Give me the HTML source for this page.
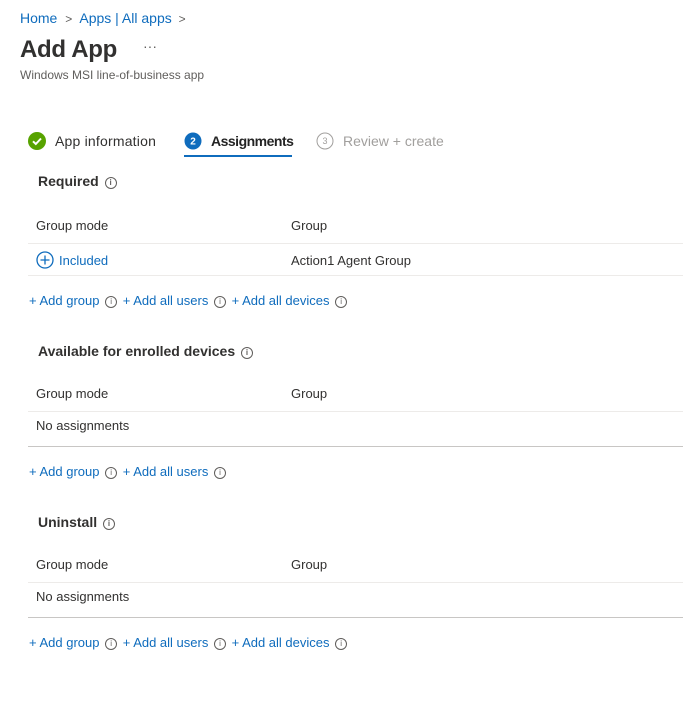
<!DOCTYPE html><html><head><style>
body{margin:0;width:683px;height:726px;background:#fff;font-family:"Liberation Sans",sans-serif;color:#323130;position:relative;overflow:hidden}
.a{position:absolute;white-space:nowrap}
.l{color:#0f6cbd;font-size:13px}
.i{display:inline-block;width:10px;height:10px;border:1px solid #605e5c;border-radius:50%;font-size:8px;line-height:10px;text-align:center;color:#605e5c;vertical-align:1px;margin:0 2px}
.h{font-size:14px;font-weight:bold}
.th{font-size:13px}
.ln{position:absolute;left:28px;right:0;height:1px;background:#edebe9}
.dk{background:#c8c6c4}
</style></head><body>
<div class="a" style="left:20px;top:10px;font-size:14px;color:#0f6cbd">Home <span style="color:#605e5c;font-size:12px;margin:0 4px">&gt;</span> Apps | All apps <span style="color:#605e5c;font-size:12px;margin-left:3px">&gt;</span></div>
<div class="a" style="left:20px;top:36px;font-size:24px;font-weight:bold;letter-spacing:-0.3px">Add App</div>
<div class="a" style="left:143px;top:38px;font-size:14px;color:#605e5c">···</div>
<div class="a" style="left:20px;top:68px;font-size:12px;color:#605e5c">Windows MSI line-of-business app</div>

<svg class="a" style="left:28px;top:132px" width="18" height="18"><circle cx="9" cy="9" r="9" fill="#57a300"/><path d="M5 9.3l2.8 2.7L13 6.5" stroke="#fff" stroke-width="2" fill="none"/></svg>
<div class="a" style="left:55px;top:133px;font-size:14px;letter-spacing:0.2px">App information</div>
<svg class="a" style="left:184px;top:132px" width="18" height="18"><circle cx="9" cy="9" r="8.5" fill="#0f6cbd"/><text x="9" y="12.5" font-size="10" fill="#fff" text-anchor="middle" font-family="Liberation Sans" font-weight="bold">2</text></svg>
<div class="a" style="left:211px;top:133px;font-size:14px;font-weight:bold;color:#242424;letter-spacing:-0.5px">Assignments</div>
<div class="a" style="left:184px;top:155px;width:108px;height:2px;background:#0f6cbd"></div>
<svg class="a" style="left:316px;top:132px" width="18" height="18"><circle cx="9" cy="9" r="8" fill="none" stroke="#a19f9d"/><text x="9" y="12" font-size="9" fill="#a19f9d" text-anchor="middle" font-family="Liberation Sans">3</text></svg>
<div class="a" style="left:343px;top:133px;font-size:14px;color:#a19f9d">Review + create</div>

<div class="a h" style="left:38px;top:173px">Required <span class="i">i</span></div>
<div class="a th" style="left:36px;top:218px">Group mode</div><div class="a th" style="left:291px;top:218px">Group</div>
<div class="ln" style="top:243px"></div>
<svg class="a" style="left:36px;top:251px" width="18" height="18"><circle cx="9" cy="9" r="8" fill="none" stroke="#0f6cbd" stroke-width="1.3"/><path d="M9 4.5v9M4.5 9h9" stroke="#0f6cbd" stroke-width="1.3"/></svg>
<div class="a l" style="left:59px;top:253px">Included</div>
<div class="a th" style="left:291px;top:253px">Action1 Agent Group</div>
<div class="ln" style="top:275px"></div>
<div class="a l" style="left:29px;top:293px">+ Add group <span class="i">i</span> + Add all users <span class="i">i</span> + Add all devices <span class="i">i</span></div>

<div class="a h" style="left:38px;top:343px">Available for enrolled devices <span class="i">i</span></div>
<div class="a th" style="left:36px;top:386px">Group mode</div><div class="a th" style="left:291px;top:386px">Group</div>
<div class="ln" style="top:411px"></div>
<div class="a th" style="left:36px;top:418px">No assignments</div>
<div class="ln dk" style="top:446px"></div>
<div class="a l" style="left:29px;top:464px">+ Add group <span class="i">i</span> + Add all users <span class="i">i</span></div>

<div class="a h" style="left:38px;top:514px">Uninstall <span class="i">i</span></div>
<div class="a th" style="left:36px;top:557px">Group mode</div><div class="a th" style="left:291px;top:557px">Group</div>
<div class="ln" style="top:582px"></div>
<div class="a th" style="left:36px;top:589px">No assignments</div>
<div class="ln dk" style="top:617px"></div>
<div class="a l" style="left:29px;top:635px">+ Add group <span class="i">i</span> + Add all users <span class="i">i</span> + Add all devices <span class="i">i</span></div>
</body></html>
